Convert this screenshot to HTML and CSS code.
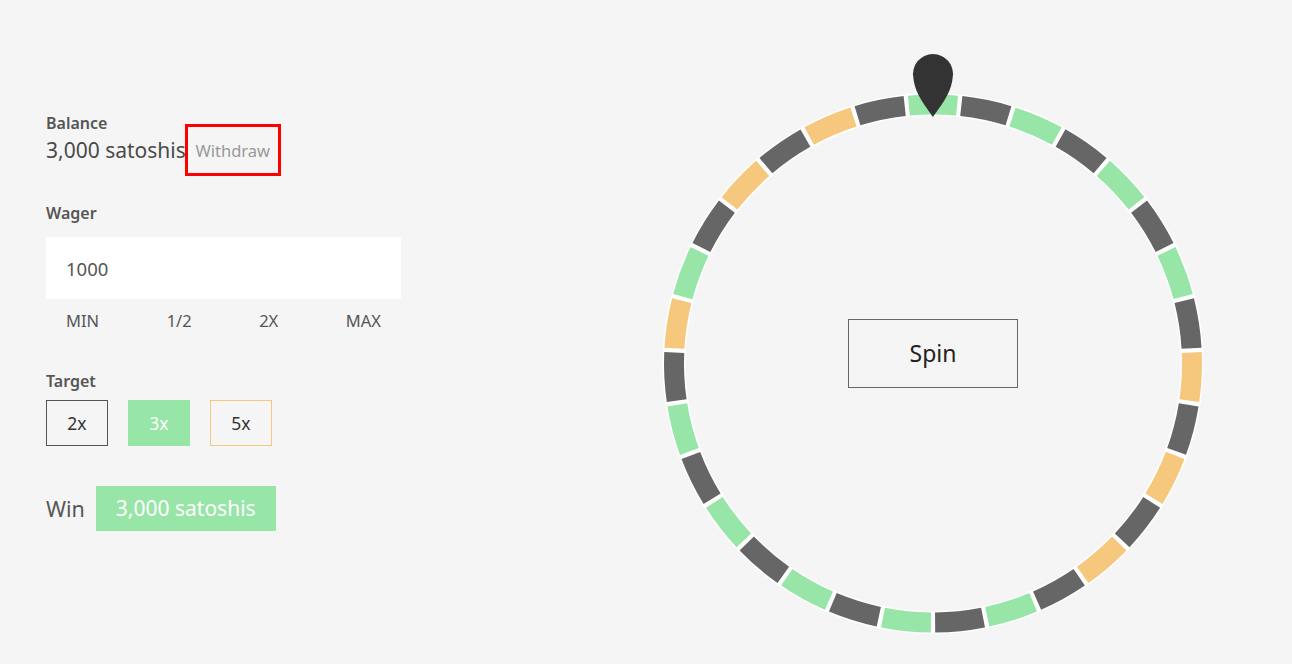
FILE: index.html
```html
<!DOCTYPE html>
<html lang="en">
<head>
    <meta charset="UTF-8">
    <meta name="viewport" content="width=device-width, initial-scale=1.0">
    <title>Wheel</title>
    <link rel="stylesheet" href="styles.css">
</head>
<body>
    <div class="page">
        <div class="controls">
            <div class="label">Balance</div>
            <div class="balance-row">
                <span class="amount">3,000 satoshis</span>
                <button class="withdraw">Withdraw</button>
            </div>

            <div class="label wager-label">Wager</div>
            <input type="text" class="wager-input" value="1000">
            <div class="quick-row">
                <button class="quick">MIN</button>
                <button class="quick">1/2</button>
                <button class="quick">2X</button>
                <button class="quick">MAX</button>
            </div>

            <div class="label target-label">Target</div>
            <div class="target-row">
                <button class="target target-2x">2x</button>
                <button class="target target-3x">3x</button>
                <button class="target target-5x">5x</button>
            </div>

            <div class="win-row">
                <span class="win-label">Win</span>
                <span class="win-amount">3,000 satoshis</span>
            </div>
        </div>

        <div class="wheel">
            <svg class="wheel-svg" width="560" height="600" viewBox="0 0 560 600">
                <g transform="translate(280 323.5)">
                    <circle class="ring" r="259"/>
                    <circle class="seg g" r="259" pathLength="31" transform="rotate(-95.342)"/>
                    <circle class="seg d" r="259" pathLength="31" transform="rotate(-83.729)"/>
                    <circle class="seg g" r="259" pathLength="31" transform="rotate(-72.116)"/>
                    <circle class="seg d" r="259" pathLength="31" transform="rotate(-60.503)"/>
                    <circle class="seg g" r="259" pathLength="31" transform="rotate(-48.890)"/>
                    <circle class="seg d" r="259" pathLength="31" transform="rotate(-37.277)"/>
                    <circle class="seg g" r="259" pathLength="31" transform="rotate(-25.665)"/>
                    <circle class="seg d" r="259" pathLength="31" transform="rotate(-14.052)"/>
                    <circle class="seg o" r="259" pathLength="31" transform="rotate(-2.439)"/>
                    <circle class="seg d" r="259" pathLength="31" transform="rotate(9.174)"/>
                    <circle class="seg o" r="259" pathLength="31" transform="rotate(20.787)"/>
                    <circle class="seg d" r="259" pathLength="31" transform="rotate(32.400)"/>
                    <circle class="seg o" r="259" pathLength="31" transform="rotate(44.013)"/>
                    <circle class="seg d" r="259" pathLength="31" transform="rotate(55.626)"/>
                    <circle class="seg g" r="259" pathLength="31" transform="rotate(67.239)"/>
                    <circle class="seg d" r="259" pathLength="31" transform="rotate(78.852)"/>
                    <circle class="seg g" r="259" pathLength="31" transform="rotate(90.464)"/>
                    <circle class="seg d" r="259" pathLength="31" transform="rotate(102.077)"/>
                    <circle class="seg g" r="259" pathLength="31" transform="rotate(113.690)"/>
                    <circle class="seg d" r="259" pathLength="31" transform="rotate(125.303)"/>
                    <circle class="seg g" r="259" pathLength="31" transform="rotate(136.916)"/>
                    <circle class="seg d" r="259" pathLength="31" transform="rotate(148.529)"/>
                    <circle class="seg g" r="259" pathLength="31" transform="rotate(160.142)"/>
                    <circle class="seg d" r="259" pathLength="31" transform="rotate(171.755)"/>
                    <circle class="seg o" r="259" pathLength="31" transform="rotate(183.368)"/>
                    <circle class="seg g" r="259" pathLength="31" transform="rotate(194.981)"/>
                    <circle class="seg d" r="259" pathLength="31" transform="rotate(206.593)"/>
                    <circle class="seg o" r="259" pathLength="31" transform="rotate(218.206)"/>
                    <circle class="seg d" r="259" pathLength="31" transform="rotate(229.819)"/>
                    <circle class="seg o" r="259" pathLength="31" transform="rotate(241.432)"/>
                    <circle class="seg d" r="259" pathLength="31" transform="rotate(253.045)"/>
                </g>
                <!-- pointer -->
                <path class="pointer" d="M280 77 C275 69 262 55 260.4 38 A20 20 0 1 1 299.6 38 C298 55 285 69 280 77 Z"/>
            </svg>
            <button class="spin">Spin</button>
        </div>
    </div>
</body>
</html>
```

FILE: styles.css
```css
body {
    font-family: 'Noto Sans', 'Open Sans', sans-serif;
    background-color: #f5f5f5;
    color: #555;
    margin: 0;
}
button, input {
    font-family: inherit;
}
.page {
    display: flex;
    align-items: flex-start;
    padding-left: 46px;
}
.controls {
    width: 355px;
    padding-top: 114px;
}
.label {
    font-size: 16px;
    font-weight: 600;
    line-height: 18px;
    color: #555;
}
.balance-row {
    display: flex;
    align-items: center;
    height: 30px;
    margin-top: 3px;
}
.amount {
    font-size: 21px;
    color: #4a4a4a;
    margin-right: -1px;
}
.withdraw {
    margin: -11px 0 -11px 0;
    width: 96px;
    height: 52px;
    border: 3px solid #ff0000;
    background: transparent;
    color: #999;
    font-size: 16.5px;
    padding: 0;
}
.wager-label {
    margin-top: 39px;
}
.wager-input {
    display: block;
    width: 100%;
    height: 62px;
    margin-top: 15px;
    padding: 0 20px;
    box-sizing: border-box;
    border: none;
    background: #fff;
    font-size: 18.5px;
    color: #555;
    outline: none;
}
.quick-row {
    display: flex;
    justify-content: space-between;
    padding: 0 20px;
    margin-top: 12px;
}
.quick {
    border: none;
    background: none;
    padding: 0;
    font-size: 16.5px;
    line-height: 20px;
    color: #555;
}
.target-label {
    margin-top: 41px;
}
.target-row {
    display: flex;
    gap: 20px;
    margin-top: 10px;
}
.target {
    width: 62px;
    height: 46px;
    padding: 0;
    font-size: 17.5px;
    color: #333;
    background: transparent;
    border: 1px solid #555;
}
.target-3x {
    background: #98e5a8;
    border-color: #98e5a8;
    color: #fff;
}
.target-5x {
    border-color: #f5c87d;
}
.win-row {
    display: flex;
    align-items: center;
    gap: 11px;
    margin-top: 40px;
}
.win-label {
    font-size: 21.5px;
    color: #555;
}
.win-amount {
    background: #98e5a8;
    color: #fff;
    font-size: 21px;
    height: 45px;
    line-height: 45px;
    padding: 0 20px;
}
.wheel {
    display: grid;
    place-items: center;
    margin-left: 252px;
    margin-top: 40px;
}
.wheel-svg, .spin {
    grid-area: 1 / 1;
}
.wheel-svg {
    display: block;
}
.ring {
    fill: none;
    stroke: #fff;
    stroke-width: 23;
}
.seg {
    fill: none;
    stroke-width: 20;
    stroke-dasharray: 0.92 30.08;
}
.seg.g { stroke: #98e5a8; }
.seg.d { stroke: #666; }
.seg.o { stroke: #f5c87d; }
.pointer {
    fill: #333;
}
.spin {
    width: 170px;
    height: 69px;
    margin-top: 26px;
    background: transparent;
    border: 1px solid #666;
    font-size: 23px;
    color: #222;
}
```
